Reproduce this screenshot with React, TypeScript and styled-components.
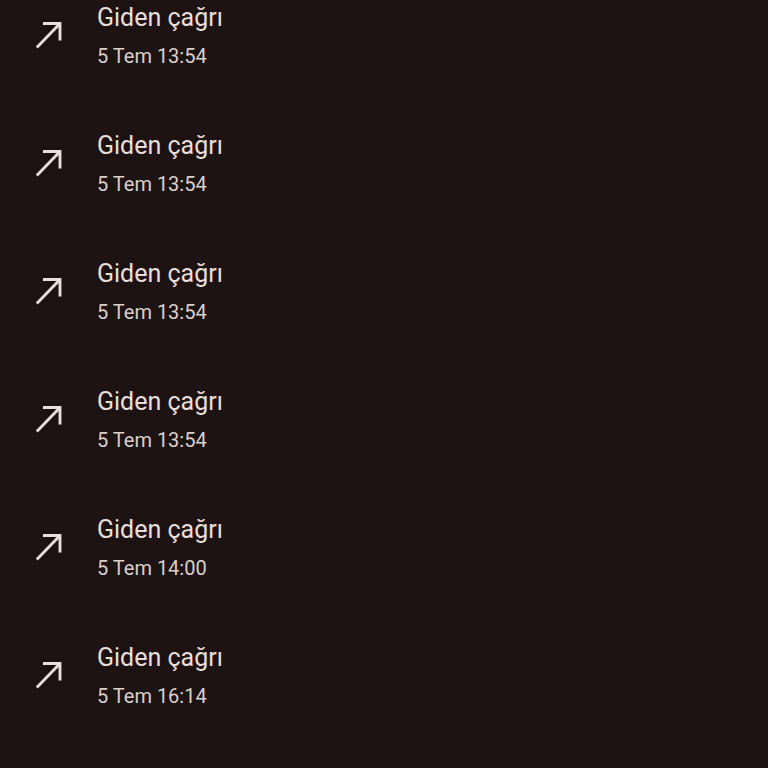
import { createGlobalStyle, styled } from 'styled-components';

const GlobalStyle = createGlobalStyle`
  html, body {
    margin: 0;
    padding: 0;
    background: #1b1211;
  }
  body {
    font-family: Roboto, "Noto Sans", sans-serif;
  }
`;

const Page = styled.div`
  width: 768px;
  height: 768px;
  overflow: hidden;
  background: #1b1211;
  display: flex;
  flex-direction: column;
`;

const Row = styled.div`
  display: flex;
  height: 128px;
  flex-shrink: 0;
  box-sizing: border-box;
  padding-top: 2px;
`;

const IconCell = styled.div`
  width: 97px;
  flex-shrink: 0;
  box-sizing: border-box;
  padding-left: 35px;
  padding-top: 18px;
  svg {
    display: block;
  }
`;

const TextCol = styled.div`
  display: flex;
  flex-direction: column;
  gap: 8px;
`;

const Title = styled.span`
  font-size: 25px;
  line-height: 32px;
  color: #e9dedb;
`;

const Time = styled.span`
  font-size: 20px;
  line-height: 28px;
  color: #dbcfcb;
`;

const calls = ['5 Tem 13:54', '5 Tem 13:54', '5 Tem 13:54', '5 Tem 13:54', '5 Tem 14:00', '5 Tem 16:14'];

function OutgoingIcon() {
  return (
    <svg width="28" height="30" viewBox="0 0 28 30" fill="none">
      <path d="M8 3.5H25V20.5M25 3.5L1.8 27.5" stroke="#e9dedb" strokeWidth="2.9" />
    </svg>
  );
}

export default function App() {
  return (
    <>
      <GlobalStyle />
      <Page>
        {calls.map((time, i) => (
          <Row key={i}>
            <IconCell>
              <OutgoingIcon />
            </IconCell>
            <TextCol>
              <Title>Giden çağrı</Title>
              <Time>{time}</Time>
            </TextCol>
          </Row>
        ))}
      </Page>
    </>
  );
}
